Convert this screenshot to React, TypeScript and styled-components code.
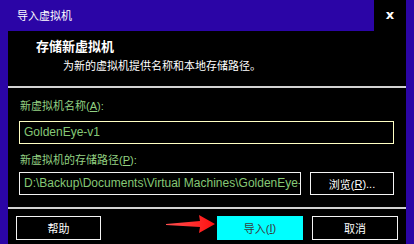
import React from "react";
import styled, { createGlobalStyle } from "styled-components";

const Global = createGlobalStyle`
  html, body { margin: 0; padding: 0; background: #000; }
  body { font-family: "Liberation Sans", "Noto Sans CJK SC", sans-serif; }
  * { box-sizing: border-box; }
`;

const CJK = `"Liberation Sans", "Noto Sans CJK SC", sans-serif`;

const Frame = styled.div`
  position: relative;
  width: 414px;
  height: 244px;
  overflow: hidden;
  background: #2b05a6;
  padding: 0 8px;
  display: flex;
  flex-direction: column;
`;

const TitleBar = styled.div`
  height: 31px;
  flex: none;
  display: flex;
  align-items: stretch;
`;

const Title = styled.div`
  flex: 1;
  display: flex;
  align-items: center;
  padding: 0 0 2px 9px;
  color: #fff;
  font-family: ${CJK};
  font-size: 11px;
`;

const Close = styled.div`
  width: 32px;
  background: #000;
  color: #fff;
  display: flex;
  align-items: center;
  justify-content: center;
  padding-bottom: 3px;
  font-family: "DejaVu Sans", sans-serif;
  font-weight: 900;
  font-size: 13px;
`;

const Content = styled.div`
  flex: 1;
  background: #000;
  display: flex;
  flex-direction: column;
`;

const Header = styled.div`
  height: 55px;
  flex: none;
  padding-top: 8px;
  color: #fff;
  font-family: ${CJK};
`;

const Heading = styled.div`
  padding-left: 28px;
  font-size: 13px;
  font-weight: bold;
  line-height: 16px;
`;

const Sub = styled.div`
  padding-left: 55px;
  margin-top: 3px;
  font-size: 11px;
  line-height: 16px;
`;

const Rule = styled.div`
  height: 2px;
  flex: none;
  background: #d2d2d2;
`;

const Body = styled.div`
  flex: none;
  height: 119px;
  padding: 10px 12px 0 11px;
  display: flex;
  flex-direction: column;
`;

const Label = styled.div<{ $gap: number }>`
  color: #93d283;
  font-family: ${CJK};
  font-size: 11px;
  line-height: 16px;
  padding-left: 1px;
  margin-top: ${(p) => p.$gap}px;
  u { text-decoration: underline; }
`;

const Field = styled.div<{ $focus?: boolean; $top: number }>`
  height: 23px;
  margin-top: ${(p) => p.$top}px;
  border: 1px solid ${(p) => (p.$focus ? "#ffffc4" : "#f2f2f2")};
  color: #86c876;
  font-family: "Liberation Sans", sans-serif;
  font-size: 12px;
  line-height: 21px;
  padding-left: 4px;
  white-space: nowrap;
  overflow: hidden;
  flex: 1;
`;

const Row = styled.div`
  display: flex;
  gap: 9px;
`;

const Button = styled.div<{ $primary?: boolean; $w: number }>`
  width: ${(p) => p.$w}px;
  height: 24px;
  flex: none;
  border: 1px solid ${(p) => (p.$primary ? "#00ffff" : "#f4f4f4")};
  background: ${(p) => (p.$primary ? "#00ffff" : "#000")};
  color: ${(p) => (p.$primary ? "#3a3a3a" : "#fff")};
  font-family: ${CJK};
  font-size: 11px;
  display: flex;
  align-items: center;
  justify-content: center;
  u { text-decoration: underline; }
`;

const Footer = styled.div`
  flex: 1;
  padding: 7px 8px 0 8px;
  display: flex;
  justify-content: space-between;
  align-items: flex-start;
`;

const Group = styled.div`
  display: flex;
  gap: 9px;
`;

const Arrow = styled.svg`
  position: absolute;
  left: 164px;
  top: 213px;
  width: 54px;
  height: 22px;
`;

export default function App() {
  return (
    <>
      <Global />
      <Frame>
        <TitleBar>
          <Title>导入虚拟机</Title>
          <Close>x</Close>
        </TitleBar>
        <Content>
          <Header>
            <Heading>存储新虚拟机</Heading>
            <Sub>为新的虚拟机提供名称和本地存储路径。</Sub>
          </Header>
          <Rule />
          <Body>
            <Label $gap={0}>
              新虚拟机名称(<u>A</u>):
            </Label>
            <Row>
              <Field $focus $top={7}>GoldenEye-v1</Field>
            </Row>
            <Label $gap={8}>
              新虚拟机的存储路径(<u>P</u>):
            </Label>
            <Row>
              <Field $top={4}>D:\Backup\Documents\Virtual Machines\GoldenEye-v1</Field>
              <Button $w={84} style={{ marginTop: 4, height: 23 }}>
                浏览(<u>R</u>)...
              </Button>
            </Row>
          </Body>
          <Rule />
          <Footer>
            <Button $w={85}>帮助</Button>
            <Group>
              <Button $w={86} $primary>
                导入(<u>I</u>)
              </Button>
              <Button $w={86}>取消</Button>
            </Group>
          </Footer>
        </Content>
        <Arrow viewBox="0 0 54 22">
          <defs>
            <linearGradient id="ag" x1="0" y1="0" x2="1" y2="0">
              <stop offset="0" stopColor="#ff5050" />
              <stop offset="1" stopColor="#ff1010" />
            </linearGradient>
          </defs>
          <polygon
            points="2,11 36,8 35,2 51,11 35,20 36,14 2,12"
            fill="url(#ag)"
          />
        </Arrow>
      </Frame>
    </>
  );
}
